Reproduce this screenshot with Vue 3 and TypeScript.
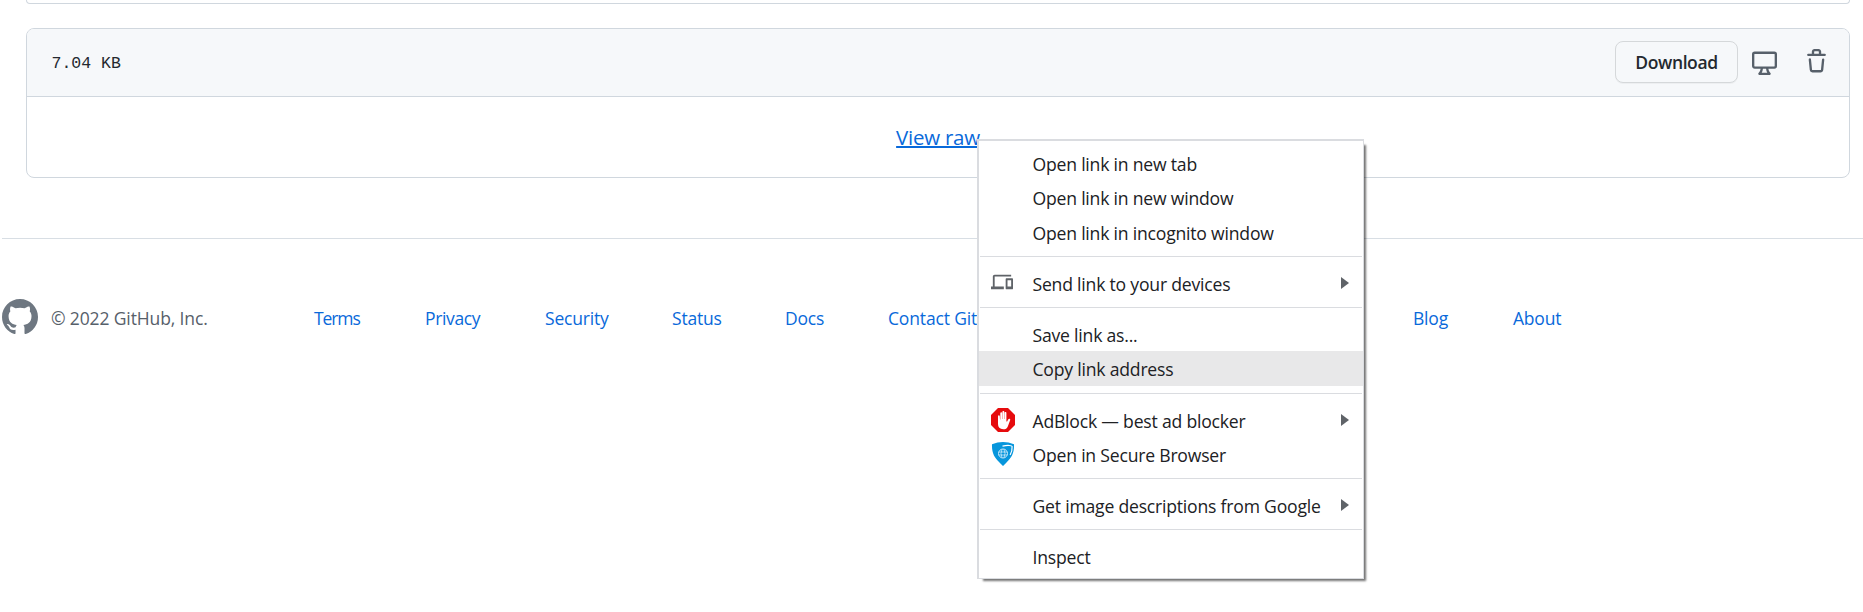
<script setup lang="ts">
interface MenuItem {
  label: string
  icon?: 'devices' | 'adblock' | 'shield'
  submenu?: boolean
  active?: boolean
}

interface FooterLink {
  label: string
  cls: string
}

const groups: MenuItem[][] = [
  [
    { label: 'Open link in new tab' },
    { label: 'Open link in new window' },
    { label: 'Open link in incognito window' },
  ],
  [{ label: 'Send link to your devices', icon: 'devices', submenu: true }],
  [{ label: 'Save link as...' }, { label: 'Copy link address', active: true }],
  [
    { label: 'AdBlock — best ad blocker', icon: 'adblock', submenu: true },
    { label: 'Open in Secure Browser', icon: 'shield' },
  ],
  [{ label: 'Get image descriptions from Google', submenu: true }],
  [{ label: 'Inspect' }],
]

const links: FooterLink[] = [
  { label: 'Terms', cls: 'terms' },
  { label: 'Privacy', cls: 'privacy' },
  { label: 'Security', cls: 'security' },
  { label: 'Status', cls: 'status' },
  { label: 'Docs', cls: 'docs' },
  { label: 'Contact Git', cls: 'contact' },
  { label: 'Blog', cls: 'blog' },
  { label: 'About', cls: 'about' },
]
</script>

<template>
  <div class="page">
    <div class="previous-box"></div>
    <section class="file-box">
      <header class="file-header">
        <span class="size">7.04 KB</span>
        <div class="actions">
          <button class="download">Download</button>
          <svg class="desktop" viewBox="0 0 16 16" width="25" height="25">
            <path fill-rule="evenodd" d="M1.75 2.5h12.5a.25.25 0 01.25.25v7.5a.25.25 0 01-.25.25H1.75a.25.25 0 01-.25-.25v-7.5a.25.25 0 01.25-.25zM14.25 1H1.75A1.75 1.75 0 000 2.75v7.5C0 11.216.784 12 1.75 12h3.727c-.1 1.041-.52 1.872-1.292 2.757A.75.75 0 004.75 16h6.5a.75.75 0 00.565-1.243c-.772-.885-1.193-1.716-1.292-2.757h3.727A1.75 1.75 0 0016 10.25v-7.5A1.75 1.75 0 0014.25 1zM9.018 12H6.982a5.72 5.72 0 01-.765 2.5h3.566a5.72 5.72 0 01-.765-2.5z" />
          </svg>
          <svg class="trash" viewBox="0 0 16 16" width="25" height="25">
            <path fill-rule="evenodd" d="M6.5 1.75a.25.25 0 01.25-.25h2.5a.25.25 0 01.25.25V3h-3V1.75zm4.5 0V3h2.25a.75.75 0 010 1.5H2.75a.75.75 0 010-1.5H5V1.75C5 .784 5.784 0 6.75 0h2.5C10.216 0 11 .784 11 1.75zM4.496 6.675a.75.75 0 10-1.492.15l.66 6.6A1.75 1.75 0 005.405 15h5.19c.9 0 1.652-.681 1.741-1.576l.66-6.6a.75.75 0 00-1.492-.149l-.66 6.6a.25.25 0 01-.249.225h-5.19a.25.25 0 01-.249-.225l-.66-6.6z" />
          </svg>
        </div>
      </header>
      <div class="file-body"><a class="raw">View raw</a></div>
    </section>

    <footer class="footer">
      <svg class="mark" viewBox="0 0 16 16" width="36" height="36">
        <path fill-rule="evenodd" d="M8 0C3.58 0 0 3.58 0 8c0 3.54 2.29 6.53 5.47 7.59.4.07.55-.17.55-.38 0-.19-.01-.82-.01-1.49-2.01.37-2.53-.49-2.69-.94-.09-.23-.48-.94-.82-1.13-.28-.15-.68-.52-.01-.53.63-.01 1.08.58 1.23.82.72 1.21 1.87.87 2.33.66.07-.52.28-.87.51-1.07-1.78-.2-3.64-.89-3.64-3.95 0-.87.31-1.59.82-2.15-.08-.2-.36-1.02.08-2.12 0 0 .67-.21 2.2.82.64-.18 1.32-.27 2-.27.68 0 1.36.09 2 .27 1.53-1.04 2.2-.82 2.2-.82.44 1.1.16 1.92.08 2.12.51.56.82 1.27.82 2.15 0 3.07-1.87 3.75-3.65 3.95.29.25.54.73.54 1.48 0 1.07-.01 1.93-.01 2.2 0 .21.15.46.55.38A8.013 8.013 0 0016 8c0-4.42-3.58-8-8-8z" />
      </svg>
      <span class="copyright">© 2022 GitHub, Inc.</span>
      <nav class="links">
        <a v-for="link in links" :key="link.cls" :class="link.cls">{{ link.label }}</a>
      </nav>
    </footer>

    <div class="menu">
      <div v-for="(group, g) in groups" :key="g" class="group">
        <div v-for="item in group" :key="item.label" class="item" :class="{ active: item.active }">
          <span class="icon">
            <svg v-if="item.icon === 'devices'" class="devices" viewBox="0 0 24 24" width="22" height="22">
              <path d="M4 6h18V4H4c-1.100 0-2 .9-2 2v11H0v3h14v-3H4V6zm19 2h-6c-.55 0-1 .45-1 1v10c0 .55.45 1 1 1h6c.55 0 1-.45 1-1V9c0-.55-.45-1-1-1zm-1 9h-4v-7h4v7z" />
            </svg>
            <svg v-else-if="item.icon === 'adblock'" viewBox="0 0 24 24" width="24" height="24">
              <path fill="#e60b0d" d="M7 0h10l7 7v10l-7 7H7l-7-7V7z" />
              <path fill="#fff" d="M7 8.200c0-1.300 1.700-1.300 1.800 0l.2 3.300h.3V5.300c0-1.300 1.800-1.300 1.800 0V11h.3V3.900c0-1.300 1.900-1.300 1.900 0V11h.3V5c0-1.300 1.800-1.300 1.800 0v8.500l.7.100 1.200-2.300c.6-1.200 2.400-.5 1.900.7l-2.400 6.400c-.8 2-2.200 2.800-4.600 2.800C8.800 21.200 7 19.400 7 16z" />
            </svg>
            <svg v-else-if="item.icon === 'shield'" viewBox="0 0 24 24" width="24" height="24">
              <path fill="#0796dc" d="M1 2.300Q12-2.200 23 2.300C23.400 11 20.500 16 15.500 20.500L12 24l-3.500-3.500C3.500 16 .6 11 1 2.300z" />
              <path fill="none" stroke="#fff" stroke-width="1.200" d="M11.500 4.200c5.500-1.400 9.300-.6 9.600.2.200 3-.5 6-2 8.600" />
              <circle cx="12" cy="11.500" r="4.500" fill="none" stroke="#cbeafa" stroke-width="1" />
              <path fill="none" stroke="#cbeafa" stroke-width=".8" d="M7.800 10h8.400M7.800 13h8.400M11 7.200q-2 4.300 0 8.600M13 7.200q2 4.300 0 8.600" />
            </svg>
          </span>
          <span class="label">{{ item.label }}</span>
          <svg v-if="item.submenu" class="arrow" viewBox="0 0 8 12" width="8" height="12">
            <path d="M0 0l8 6-8 6z" />
          </svg>
        </div>
      </div>
    </div>
  </div>
</template>

<style>
body {
  margin: 0;
  background: #fff;
}
</style>

<style scoped>
.page {
  position: relative;
  box-sizing: border-box;
  width: 1863px;
  height: 612px;
  overflow: hidden;
  background: #fff;
  color: #24292f;
  font-family: 'Open Sans', 'Noto Sans', sans-serif;
}
.previous-box {
  box-sizing: border-box;
  height: 4px;
  margin: 0 13px 0 26px;
  border: 1px solid #d0d7de;
  border-top: 0;
  border-radius: 0 0 8px 8px;
}
.file-box {
  box-sizing: border-box;
  height: 150px;
  margin: 24px 13px 0 26px;
  border: 1px solid #d0d7de;
  border-radius: 8px;
  overflow: hidden;
}
.file-header {
  box-sizing: border-box;
  display: flex;
  align-items: center;
  justify-content: space-between;
  height: 68px;
  padding: 0 20px 0 24.500px;
  border-bottom: 1px solid #d0d7de;
  background: #f6f8fa;
}
.size {
  padding-top: 1px;
  font: 16.500px 'Liberation Mono', monospace;
}
.actions {
  display: flex;
  align-items: center;
  margin-top: -1px;
}
.download {
  box-sizing: border-box;
  width: 123px;
  height: 42px;
  margin-right: 14px;
  padding: 0;
  border: 1px solid #d5d8da;
  border-radius: 8px;
  background: #f6f8fa;
  box-shadow: 0 1px 0 rgba(27, 31, 36, 0.04);
  color: #24292f;
  font: 600 17.500px 'Open Sans', sans-serif;
  letter-spacing: -0.4px;
}
.desktop,
.trash {
  fill: #57606a;
}
.trash {
  margin: -2px 0 0 27px;
}
.file-body {
  display: flex;
  justify-content: center;
  padding-top: 25px;
}
.raw {
  color: #0969da;
  font-size: 20.500px;
  line-height: 30px;
  letter-spacing: -0.25px;
  text-decoration: underline;
  text-decoration-thickness: 2px;
}
.footer {
  display: flex;
  align-items: center;
  height: 157px;
  margin: 60px 0 0 2px;
  border-top: 1px solid #d8dee4;
  font-size: 17.500px;
}
.mark {
  margin-top: -2px;
  fill: #6e7781;
}
.copyright {
  width: 263px;
  margin-left: 13px;
  color: #57606a;
  letter-spacing: -0.13px;
  white-space: nowrap;
}
.links {
  display: flex;
  color: #0969da;
  letter-spacing: -0.2px;
  white-space: nowrap;
}
.terms {
  width: 111px;
  letter-spacing: -1.1px;
}
.privacy {
  width: 120px;
  letter-spacing: -0.35px;
}
.security { width: 127px; }
.status { width: 113px; }
.docs { width: 103px; }
.contact {
  width: 525px;
  letter-spacing: -0.15px;
}
.blog { width: 100px; }
.menu {
  position: absolute;
  top: 139px;
  left: 977px;
  box-sizing: border-box;
  width: 387px;
  height: 440px;
  padding-top: 5px;
  border: 2px solid #dadce0;
  border-right-width: 1px;
  border-bottom-width: 1px;
  background: #fff;
  box-shadow: 4px 4px 2px -2px rgba(0, 0, 0, 0.55);
  color: #202124;
  font-size: 17.600px;
  letter-spacing: -0.21px;
}
.group + .group {
  position: relative;
  padding-top: 17px;
}
.group + .group::before {
  position: absolute;
  top: 7px;
  right: 1px;
  left: 1px;
  height: 1px;
  background: #dadce0;
  content: '';
}
.item {
  display: flex;
  align-items: center;
  height: 34.250px;
  white-space: nowrap;
}
.item.active {
  background: #e8e8e9;
}
.icon {
  display: flex;
  width: 41.500px;
  height: 24px;
  padding-left: 12px;
}
.devices {
  fill: #5f6368;
}
.label {
  flex: 1;
  padding-top: 2px;
  line-height: 34px;
}
.arrow {
  margin-right: 14px;
  fill: #5f6368;
}
</style>
